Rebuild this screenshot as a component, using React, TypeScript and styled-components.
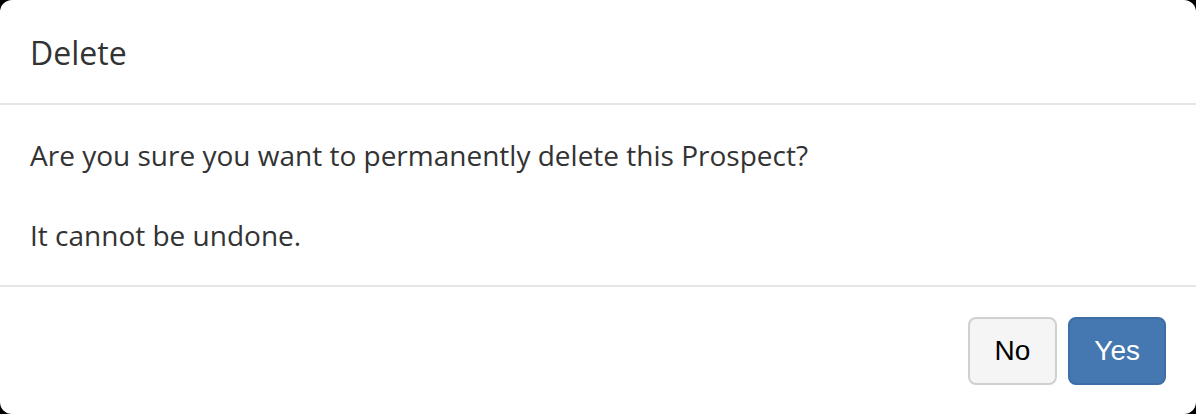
import styled, {createGlobalStyle} from "styled-components";

const GlobalStyle = createGlobalStyle`
    html, body {
        margin: 0;
        padding: 0;
        background: #000;
    }
    * {
        box-sizing: border-box;
    }
`

const ModalContent = styled.div`
    width: 1196px;
    height: 414px;
    background: #FFFFFF;
    border-radius: 12px;
    overflow: hidden;
    display: flex;
    flex-direction: column;
    font-family: "Open Sans", "Liberation Sans", sans-serif;
    color: #333333;
`

const ModalHeader = styled.div`
    padding: 30px 30px 28px 30px;
    border-bottom: 2px solid #e5e5e5;
`

const ModalTitle = styled.h4`
    margin: 0;
    font-size: 32px;
    font-weight: 400;
    line-height: 45px;
`

const ModalBody = styled.div`
    padding: 30px;
    font-size: 28px;
    line-height: 40px;
    border-bottom: 2px solid #e5e5e5;
`

const ModalFooter = styled.div`
    padding: 30px;
    display: flex;
    justify-content: flex-end;
    gap: 11px;
`

const Button = styled.button<{primary?: boolean}>`
    height: 68px;
    padding: 0 ${p => p.primary ? '24px' : '25px'};
    font-family: "Liberation Sans", Arial, sans-serif;
    font-size: 28px;
    line-height: 40px;
    border-radius: 8px;
    border: 2px solid ${p => p.primary ? '#3d6ea8' : '#d0d0d0'};
    background: ${p => p.primary ? '#4577b0' : '#f5f5f5'};
    color: ${p => p.primary ? '#FFFFFF' : '#000000'};
    cursor: pointer;
`

export default function App() {
    return (
        <>
            <GlobalStyle/>
            <ModalContent>
                <ModalHeader>
                    <ModalTitle>Delete</ModalTitle>
                </ModalHeader>
                <ModalBody>
                    Are you sure you want to permanently delete this Prospect?
                    <br/><br/>
                    It cannot be undone.
                </ModalBody>
                <ModalFooter>
                    <Button>No</Button>
                    <Button primary>Yes</Button>
                </ModalFooter>
            </ModalContent>
        </>
    );
}
